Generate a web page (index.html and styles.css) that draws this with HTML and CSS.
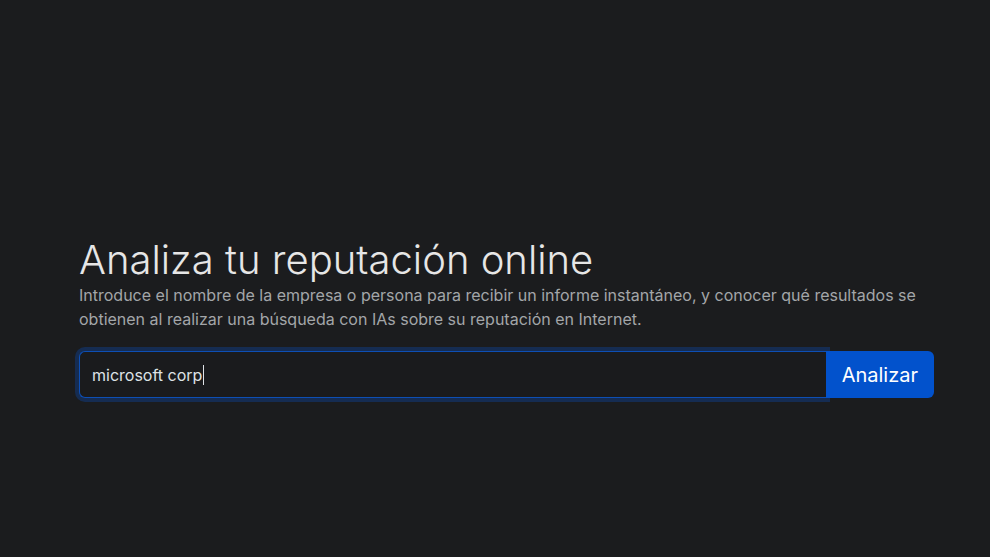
FILE: index.html
```html
<!DOCTYPE html>
<html lang="es">
<head>
<meta charset="utf-8">
<title>Analiza tu reputación online</title>
<link rel="stylesheet" href="styles.css">
</head>
<body>
<main class="page">
  <section class="hero">
    <h1 class="title">Analiza tu reputación online</h1>
    <p class="lead">Introduce el nombre de la empresa o persona para recibir un informe instantáneo, y conocer qué resultados se obtienen al realizar una búsqueda con IAs sobre su reputación en Internet.</p>
    <form class="search">
      <div class="field"><span class="value">microsoft corp</span><span class="caret"></span></div>
      <button type="button" class="btn">Analizar</button>
    </form>
  </section>
</main>
</body>
</html>
```
FILE: styles.css
```css
html, body {
  margin: 0;
  padding: 0;
  background: #1b1c1e;
  height: 100%;
}
body {
  font-family: Inter, "Noto Sans", sans-serif;
  color: #dee2e6;
}
.page {
  padding: 236px 56px 0 79px;
}
.hero {
  display: flex;
  flex-direction: column;
}
.title {
  margin: 0;
  font-size: 40px;
  font-weight: 300;
  line-height: 48px;
  color: #e6e6e6;
  letter-spacing: 0;
}
.lead {
  margin: -1px 0 0 0;
  font-size: 16px;
  line-height: 24px;
  color: #a3a6a9;
}
.search {
  display: flex;
  margin-top: 20px;
}
.field {
  flex: 1;
  height: 47px;
  box-sizing: border-box;
  border: 1px solid #0d4fb5;
  border-right: none;
  border-radius: 6px 0 0 6px;
  background: #1a1b1d;
  box-shadow: 0 0 0 4px rgba(13, 70, 160, 0.4);
  display: flex;
  align-items: center;
  padding-left: 12px;
  font-size: 16px;
  color: #dee2e6;
}
.caret {
  display: inline-block;
  width: 1px;
  height: 20px;
  background: #dee2e6;
  margin-left: 1px;
}
.btn {
  height: 47px;
  border: none;
  background: #0252cc;
  color: #ffffff;
  font-family: Inter, "Noto Sans", sans-serif;
  font-size: 20px;
  padding: 0 16px;
  border-radius: 0 6px 6px 0;
}
```
